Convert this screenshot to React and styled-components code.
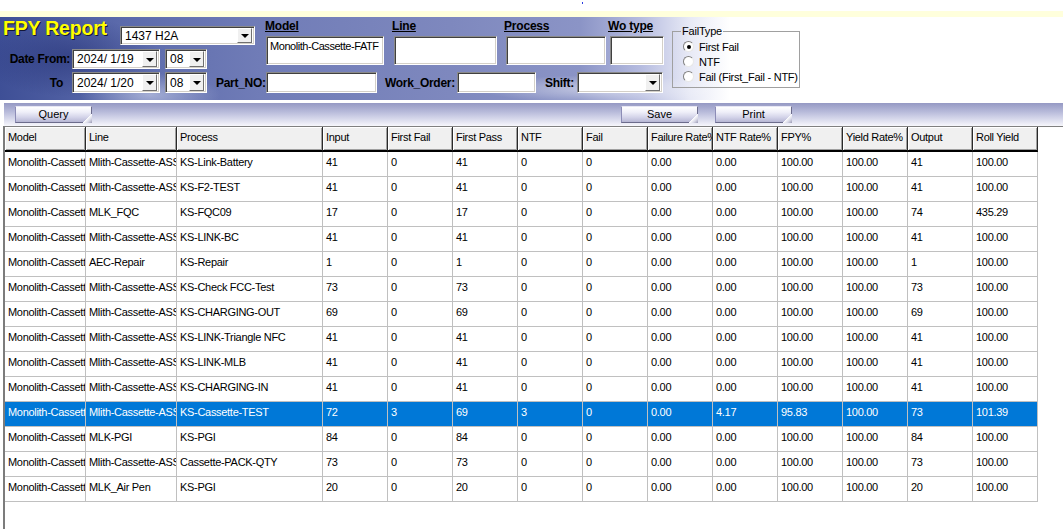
import React from 'react';
import styled, { createGlobalStyle } from 'styled-components';

const GlobalStyle = createGlobalStyle`
  html, body { margin: 0; padding: 0; background: #fff; }
  body { font-family: "Liberation Sans", Arial, sans-serif; font-size: 11px; color: #000; overflow: hidden; }
  * { box-sizing: border-box; }
`;

const Page = styled.div`
  width: 1063px;
  height: 529px;
  overflow: hidden;
  display: flex;
  flex-direction: column;
`;

const TopBar = styled.div`
  height: 11px;
  display: flex;
`;

const Dot = styled.span`
  width: 1px;
  height: 2px;
  margin: 2px 0 0 582px;
  background: #2a3ce0;
`;

const YellowStrip = styled.div`
  height: 6px;
  background: #ffffdc;
`;

const Banner = styled.div`
  height: 83px;
  padding-left: 3px;
  display: flex;
  background:
    radial-gradient(ellipse 70px 22px at 150px 78px, rgba(220, 226, 245, 0.55), rgba(220, 226, 245, 0) 100%),
    radial-gradient(ellipse 120px 14px at 600px 72px, rgba(255, 255, 255, 0.5), rgba(255, 255, 255, 0) 100%),
    radial-gradient(ellipse 90px 40px at 70px 40px, rgba(30, 42, 110, 0.5), rgba(30, 42, 110, 0) 100%),
    linear-gradient(to right, #3e4f96 0px, #5b6aab 120px, #707cb7 260px, #7e88be 450px, #8b94c6 580px, #b5bbdf 640px, #e8eaf6 690px, #ffffff 730px);
`;

const MainCol = styled.div`
  width: 661px;
  display: flex;
  flex-direction: column;
`;

const TopRow = styled.div`
  height: 55px;
  display: flex;
`;

const LeftTop = styled.div`
  width: 262px;
  display: flex;
  flex-direction: column;
`;

const TitleRow = styled.div`
  height: 32px;
  display: flex;
  align-items: flex-start;
`;

const Title = styled.div`
  width: 117px;
  font-family: "Liberation Sans", Arial, sans-serif;
  font-size: 19.5px;
  font-weight: bold;
  line-height: 22px;
  color: #ffff00;
  letter-spacing: -0.2px;
  text-shadow: 1px 1px 0 #141838;
  white-space: nowrap;
`;

const Row = styled.div`
  height: ${(p) => p.$h || 20}px;
  display: flex;
  align-items: center;
`;

const BoldLabel = styled.div`
  width: ${(p) => p.$w}px;
  margin-left: ${(p) => p.$ml || 0}px;
  padding-right: ${(p) => p.$pr || 0}px;
  text-align: ${(p) => p.$align || 'left'};
  font-size: 12px;
  font-weight: bold;
  letter-spacing: -0.3px;
  white-space: nowrap;
  color: #000;
`;

const Sunken = styled.div`
  width: ${(p) => p.$w}px;
  height: ${(p) => p.$h}px;
  margin-left: ${(p) => p.$ml || 0}px;
  margin-top: ${(p) => p.$mt || 0}px;
  background: #fff;
  border: 1px solid;
  border-color: #8a8a8a #ffffff #ffffff #8a8a8a;
  box-shadow: inset 1px 1px 0 #404040, inset -1px -1px 0 #d4d0c8;
  display: flex;
  align-items: ${(p) => (p.$top ? 'flex-start' : 'center')};
  padding: ${(p) => (p.$top ? '2px 2px 0 3px' : '0 2px 0 4px')};
  overflow: hidden;
  flex-shrink: 0;
`;

const BoxText = styled.span`
  flex: 1;
  font-size: ${(p) => p.$fs || 12}px;
  letter-spacing: ${(p) => p.$ls || 0}px;
  white-space: nowrap;
  overflow: hidden;
  line-height: 14px;
`;

const DropButton = styled.div`
  width: 15px;
  height: calc(100% - 2px);
  background: #f0f0f0;
  border: 1px solid;
  border-color: #ffffff #707070 #707070 #ffffff;
  display: flex;
  align-items: center;
  justify-content: center;
  flex-shrink: 0;
  &::before {
    content: '';
    width: 0;
    height: 0;
    border-left: 4px solid transparent;
    border-right: 4px solid transparent;
    border-top: 4px solid #000;
    margin-top: 1px;
  }
`;

const FieldCol = styled.div`
  width: ${(p) => p.$w}px;
  margin-left: ${(p) => p.$ml || 0}px;
  display: flex;
  flex-direction: column;
`;

const FieldLabel = styled.div`
  height: 19px;
  line-height: 19px;
  font-size: 12px;
  font-weight: bold;
  letter-spacing: -0.2px;
  text-decoration: underline;
  white-space: nowrap;
`;

const FailGroup = styled.fieldset`
  width: 128px;
  height: 63px;
  margin: 8px 0 0 8px;
  padding: 2px 0 0 10px;
  border: 1px solid #a0a0a0;
  display: flex;
  flex-direction: column;
  legend {
    font-size: 11px;
    padding: 0 1px;
    margin-left: -2px;
    line-height: 12px;
    letter-spacing: -0.2px;
  }
`;

const RadioRow = styled.div`
  height: 15px;
  display: flex;
  align-items: center;
  font-size: 11px;
  letter-spacing: -0.25px;
  white-space: nowrap;
`;

const RadioCircle = styled.span`
  width: 11px;
  height: 11px;
  border-radius: 50%;
  margin-right: 5px;
  background: #fff;
  border: 1px solid;
  border-color: #808080 #e8e8e8 #e8e8e8 #808080;
  display: flex;
  align-items: center;
  justify-content: center;
  flex-shrink: 0;
  &::after {
    content: '';
    width: 4px;
    height: 4px;
    border-radius: 50%;
    background: ${(p) => (p.$checked ? '#000' : 'transparent')};
  }
`;

const Toolbar = styled.div`
  margin: 3px 0 0 4px;
  height: 23px;
  padding-top: 3px;
  display: flex;
  align-items: flex-start;
  background: linear-gradient(to bottom, #9599c4 0%, #b9bcdb 40%, #e2e3f1 80%, #f7f7fc 100%);
`;

const ToolButton = styled.div`
  position: relative;
  width: 77px;
  height: 17px;
  margin-left: ${(p) => p.$ml}px;
  font-size: 11px;
  line-height: 15px;
  text-align: center;
  background: linear-gradient(to bottom, #ffffff 0%, #eeeef8 35%, #d2d2e8 70%, #b6b6d4 100%);
  border: 1px solid;
  border-color: #e6e6f4 #6c6c8c #6c6c8c #8c8cb6;
  &::after {
    content: '';
    position: absolute;
    right: -1px;
    bottom: -1px;
    width: 10px;
    height: 10px;
    background: linear-gradient(135deg, rgba(255,255,255,0) 50%, #ffffff 52%, #d8d8e6 75%, #9a9ab4 100%);
  }
`;

const GridFrame = styled.div`
  flex: 1;
  margin-left: 3px;
  border-left: 2px solid #7c7c7c;
  border-top: 1px solid #808080;
  background: #fff;
  overflow: hidden;
`;

const GridTable = styled.div`
  display: grid;
  grid-template-columns: 81px 91px 146px repeat(11, 65px);
  width: max-content;
`;

const HeaderCell = styled.div`
  height: 25px;
  padding: 3px 3px 0;
  background: #f0f0f0;
  border-right: 1px solid #2a2a2a;
  border-bottom: 2px solid #000;
  box-shadow: inset 1px 1px 0 #ffffff, inset -1px -1px 0 #a0a0a0;
  font-size: 11px;
  letter-spacing: -0.3px;
  line-height: 14px;
  white-space: nowrap;
  overflow: hidden;
`;

const DataCell = styled.div`
  height: 25px;
  padding: 3px 3px 0;
  border-right: 1px solid #c0c0c0;
  border-bottom: 1px solid #c0c0c0;
  font-size: 11px;
  letter-spacing: -0.3px;
  line-height: 14px;
  white-space: nowrap;
  overflow: hidden;
  background: ${(p) => (p.$sel ? '#0078d7' : '#ffffff')};
  color: ${(p) => (p.$sel ? '#ffffff' : '#000000')};
`;

const headers = ['Model', 'Line', 'Process', 'Input', 'First Fail', 'First Pass', 'NTF', 'Fail', 'Failure Rate%', 'NTF Rate%', 'FPY%', 'Yield Rate%', 'Output', 'Roll Yield'];

const M = 'Monolith-Cassette-FATF';
const A = 'Mlith-Cassette-ASSY';
const ok = (n, out, roll = '100.00') => [String(n), '0', String(n), '0', '0', '0.00', '0.00', '100.00', '100.00', String(out), roll];

const rows = [
  [M, A, 'KS-Link-Battery', ...ok(41, 41)],
  [M, A, 'KS-F2-TEST', ...ok(41, 41)],
  [M, 'MLK_FQC', 'KS-FQC09', ...ok(17, 74, '435.29')],
  [M, A, 'KS-LINK-BC', ...ok(41, 41)],
  [M, 'AEC-Repair', 'KS-Repair', ...ok(1, 1)],
  [M, A, 'KS-Check FCC-Test', ...ok(73, 73)],
  [M, A, 'KS-CHARGING-OUT', ...ok(69, 69)],
  [M, A, 'KS-LINK-Triangle NFC', ...ok(41, 41)],
  [M, A, 'KS-LINK-MLB', ...ok(41, 41)],
  [M, A, 'KS-CHARGING-IN', ...ok(41, 41)],
  [M, A, 'KS-Cassette-TEST', '72', '3', '69', '3', '0', '0.00', '4.17', '95.83', '100.00', '73', '101.39'],
  [M, 'MLK-PGI', 'KS-PGI', ...ok(84, 84)],
  [M, A, 'Cassette-PACK-QTY', ...ok(73, 73)],
  [M, 'MLK_Air Pen', 'KS-PGI', ...ok(20, 20)],
];

const Combo = ({ w, h = 20, ml, mt, text }) => (
  <Sunken $w={w} $h={h} $ml={ml} $mt={mt}>
    <BoxText>{text}</BoxText>
    <DropButton />
  </Sunken>
);

export default function App() {
  return (
    <Page>
      <GlobalStyle />
      <TopBar><Dot /></TopBar>
      <YellowStrip />
      <Banner>
        <MainCol>
          <TopRow>
            <LeftTop>
              <TitleRow>
                <Title>FPY Report</Title>
                <Combo w={135} h={19} mt={9} text="1437 H2A" />
              </TitleRow>
              <Row $h={20}>
                <BoldLabel $w={69} $pr={2} $align="right">Date From:</BoldLabel>
                <Combo w={88} text="2024/  1/19" />
                <Combo w={42} ml={5} text="08" />
              </Row>
            </LeftTop>
            <FieldCol $w={120}>
              <FieldLabel>Model</FieldLabel>
              <Sunken $w={118} $h={29} $ml={1} $top>
                <BoxText $fs={11} $ls={-0.45}>Monolith-Cassette-FATF</BoxText>
              </Sunken>
            </FieldCol>
            <FieldCol $w={106} $ml={7}>
              <FieldLabel>Line</FieldLabel>
              <Sunken $w={103} $h={29} $ml={2} $top />
            </FieldCol>
            <FieldCol $w={103} $ml={6}>
              <FieldLabel>Process</FieldLabel>
              <Sunken $w={100} $h={29} $ml={2} $top />
            </FieldCol>
            <FieldCol $w={56} $ml={1}>
              <FieldLabel>Wo type</FieldLabel>
              <Sunken $w={54} $h={29} $ml={2} $top />
            </FieldCol>
          </TopRow>
          <Row $h={21}>
            <BoldLabel $w={69} $pr={9} $align="right">To</BoldLabel>
            <Combo w={88} h={21} text="2024/  1/20" />
            <Combo w={42} h={21} ml={5} text="08" />
            <BoldLabel $w={50} $ml={9}>Part_NO:</BoldLabel>
            <Sunken $w={111} $h={21} />
            <BoldLabel $w={72} $ml={8}>Work_Order:</BoldLabel>
            <Sunken $w={79} $h={21} />
            <BoldLabel $w={32} $ml={9}>Shift:</BoldLabel>
            <Combo w={86} h={21} text="" />
          </Row>
        </MainCol>
        <FailGroup>
          <legend>FailType</legend>
          <RadioRow><RadioCircle $checked />First Fail</RadioRow>
          <RadioRow><RadioCircle />NTF</RadioRow>
          <RadioRow><RadioCircle />Fail (First_Fail - NTF)</RadioRow>
        </FailGroup>
      </Banner>
      <Toolbar>
        <ToolButton $ml={11}>Query</ToolButton>
        <ToolButton $ml={529}>Save</ToolButton>
        <ToolButton $ml={17}>Print</ToolButton>
      </Toolbar>
      <GridFrame>
        <GridTable>
          {headers.map((h) => (
            <HeaderCell key={h}>{h}</HeaderCell>
          ))}
          {rows.map((r, i) =>
            r.map((c, j) => (
              <DataCell key={`${i}-${j}`} $sel={i === 10}>{c}</DataCell>
            ))
          )}
        </GridTable>
      </GridFrame>
    </Page>
  );
}
